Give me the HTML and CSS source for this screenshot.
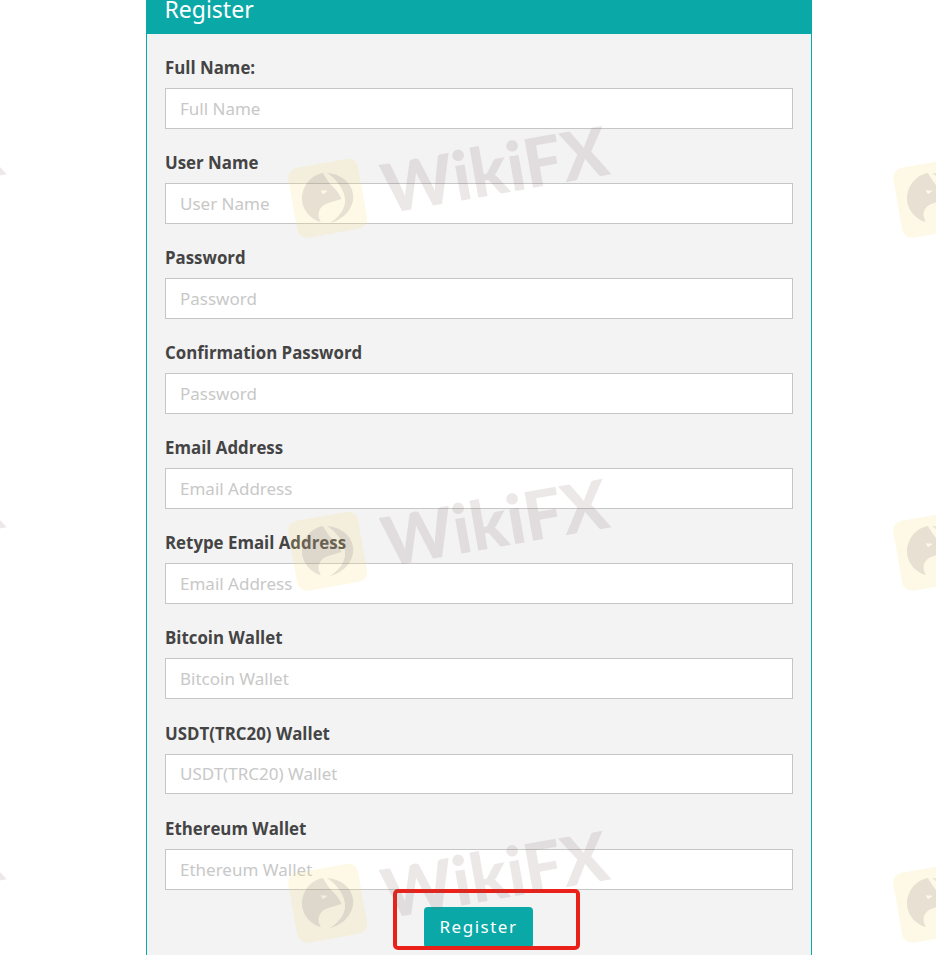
FILE: index.html
```html
<!DOCTYPE html>
<html lang="en">
<head>
    <meta charset="UTF-8">
    <meta name="viewport" content="width=device-width, initial-scale=1.0">
    <title>Register</title>
    <link rel="stylesheet" href="styles.css">
</head>
<body>
    <svg class="defs" width="0" height="0" aria-hidden="true">
        <symbol id="eagle" viewBox="0 0 62 64">
            <path fill-rule="evenodd" d="M30 3C16 3 3 14 1 30C0 42 8 54 18 58C15 50 17 44 24 40C30 37 38 38 46 36C44 28 40 22 36 17C33 11 32 7 30 3ZM24 22L32 24L26 27Z"/>
            <path d="M35 4C50 8 60 19 60 32C60 47 46 60 28 61C40 56 50 47 50 35C50 25 45 14 35 4Z"/>
        </symbol>
    </svg>

    <div class="panel">
        <div class="panel-head">Register</div>
        <form class="panel-body">
            <div class="form-group">
                <label for="fullName">Full Name:</label>
                <input type="text" id="fullName" placeholder="Full Name">
            </div>
            <div class="form-group">
                <label for="userName">User Name</label>
                <input type="text" id="userName" placeholder="User Name">
            </div>
            <div class="form-group">
                <label for="password">Password</label>
                <input type="password" id="password" placeholder="Password">
            </div>
            <div class="form-group">
                <label for="confirmPassword">Confirmation Password</label>
                <input type="password" id="confirmPassword" placeholder="Password">
            </div>
            <div class="form-group">
                <label for="email">Email Address</label>
                <input type="text" id="email" placeholder="Email Address">
            </div>
            <div class="form-group">
                <label for="retypeEmail">Retype Email Address</label>
                <input type="text" id="retypeEmail" placeholder="Email Address">
            </div>
            <div class="form-group">
                <label for="bitcoin">Bitcoin Wallet</label>
                <input type="text" id="bitcoin" placeholder="Bitcoin Wallet">
            </div>
            <div class="form-group">
                <label for="usdt">USDT(TRC20) Wallet</label>
                <input type="text" id="usdt" placeholder="USDT(TRC20) Wallet">
            </div>
            <div class="form-group">
                <label for="ethereum">Ethereum Wallet</label>
                <input type="text" id="ethereum" placeholder="Ethereum Wallet">
            </div>
            <div class="form-actions">
                <button type="submit" class="register-btn">Register</button>
            </div>
        </form>
    </div>

    <!-- Annotation round the button -->
    <div class="red-box"></div>

    <!-- Watermark tiles -->
    <div class="watermarks" aria-hidden="true">
        <div class="mark"><span class="mark-tile"><svg><use href="#eagle"/></svg></span><span class="mark-text">WikiFX</span></div>
        <div class="mark"><span class="mark-tile"><svg><use href="#eagle"/></svg></span><span class="mark-text">WikiFX</span></div>
        <div class="mark"><span class="mark-tile"><svg><use href="#eagle"/></svg></span><span class="mark-text">WikiFX</span></div>
        <div class="mark"><span class="mark-tile"><svg><use href="#eagle"/></svg></span><span class="mark-text">WikiFX</span></div>
        <div class="mark"><span class="mark-tile"><svg><use href="#eagle"/></svg></span><span class="mark-text">WikiFX</span></div>
        <div class="mark"><span class="mark-tile"><svg><use href="#eagle"/></svg></span><span class="mark-text">WikiFX</span></div>
        <div class="mark"><span class="mark-tile"><svg><use href="#eagle"/></svg></span><span class="mark-text">WikiFX</span></div>
        <div class="mark"><span class="mark-tile"><svg><use href="#eagle"/></svg></span><span class="mark-text">WikiFX</span></div>
        <div class="mark"><span class="mark-tile"><svg><use href="#eagle"/></svg></span><span class="mark-text">WikiFX</span></div>
    </div>
</body>
</html>
```

FILE: styles.css
```css
html {
    height: 100%;
    overflow: hidden;
}

body {
    position: relative;
    height: 955px;
    margin: 0;
    overflow: hidden;
    background: #fff;
    font-family: "Open Sans", "Noto Sans", sans-serif;
}

.defs {
    position: absolute;
}

.panel {
    width: 666px;
    box-sizing: border-box;
    margin: -14px 0 0 146px;
    border: 1px solid #0aa9a8;
    border-top: none;
    background: #f3f3f4;
}

.panel-head {
    margin: 0 -1px;
    padding: 0 18.5px;
    height: 48px;
    line-height: 47px;
    background: #0aa9a8;
    color: #fff;
    font-family: "Noto Sans", sans-serif;
    font-size: 23px;
}

.panel-body {
    padding: 20.7px 18px 40px;
}

.form-group {
    height: 95.125px;
}

label {
    display: block;
    height: 33px;
    line-height: 26px;
    color: #444;
    font-size: 16.85px;
    font-weight: 700;
}

input {
    display: block;
    width: 100%;
    height: 40.85px;
    box-sizing: border-box;
    padding: 0 14px;
    border: 1px solid #c6c6c6;
    background: #fff;
    font-family: "Noto Sans", sans-serif;
    font-size: 17px;
}

input::placeholder {
    color: #c8c8c8;
}

.form-actions {
    display: flex;
    margin-top: -4px;
    padding-left: 259px;
}

.register-btn {
    width: 109px;
    height: 41px;
    padding-bottom: 2px;
    border: none;
    border-radius: 4px;
    background: #0aa9a8;
    color: #fff;
    font-family: "Noto Sans", sans-serif;
    font-size: 17px;
    letter-spacing: 1.5px;
}

/* Red annotation drawn over the screenshot */
.red-box {
    position: absolute;
    left: 393px;
    top: 889px;
    width: 187px;
    height: 61px;
    box-sizing: border-box;
    border: 4px solid #ea2119;
    border-radius: 5px;
}

/* Watermark */
.watermarks {
    position: absolute;
    left: -313px;
    top: 122px;
    display: grid;
    grid-template-columns: repeat(3, 605px);
    grid-auto-rows: 352.5px;
    pointer-events: none;
}

.mark {
    display: flex;
    align-items: center;
    gap: 20px;
    width: 340px;
    height: 150px;
    transform: rotate(-10deg);
    transform-origin: 40px 75px;
}

.mark-tile {
    display: flex;
    align-items: center;
    justify-content: center;
    flex: none;
    width: 71px;
    height: 71px;
    border-radius: 10px;
    background: rgba(250, 225, 130, 0.2);
}

.mark-tile svg {
    width: 54px;
    height: 56px;
    fill: rgba(110, 95, 110, 0.16);
}

.mark-text {
    color: rgba(120, 95, 95, 0.14);
    font-family: "Lato", sans-serif;
    font-size: 68px;
    font-weight: 900;
    line-height: 1;
}
```
